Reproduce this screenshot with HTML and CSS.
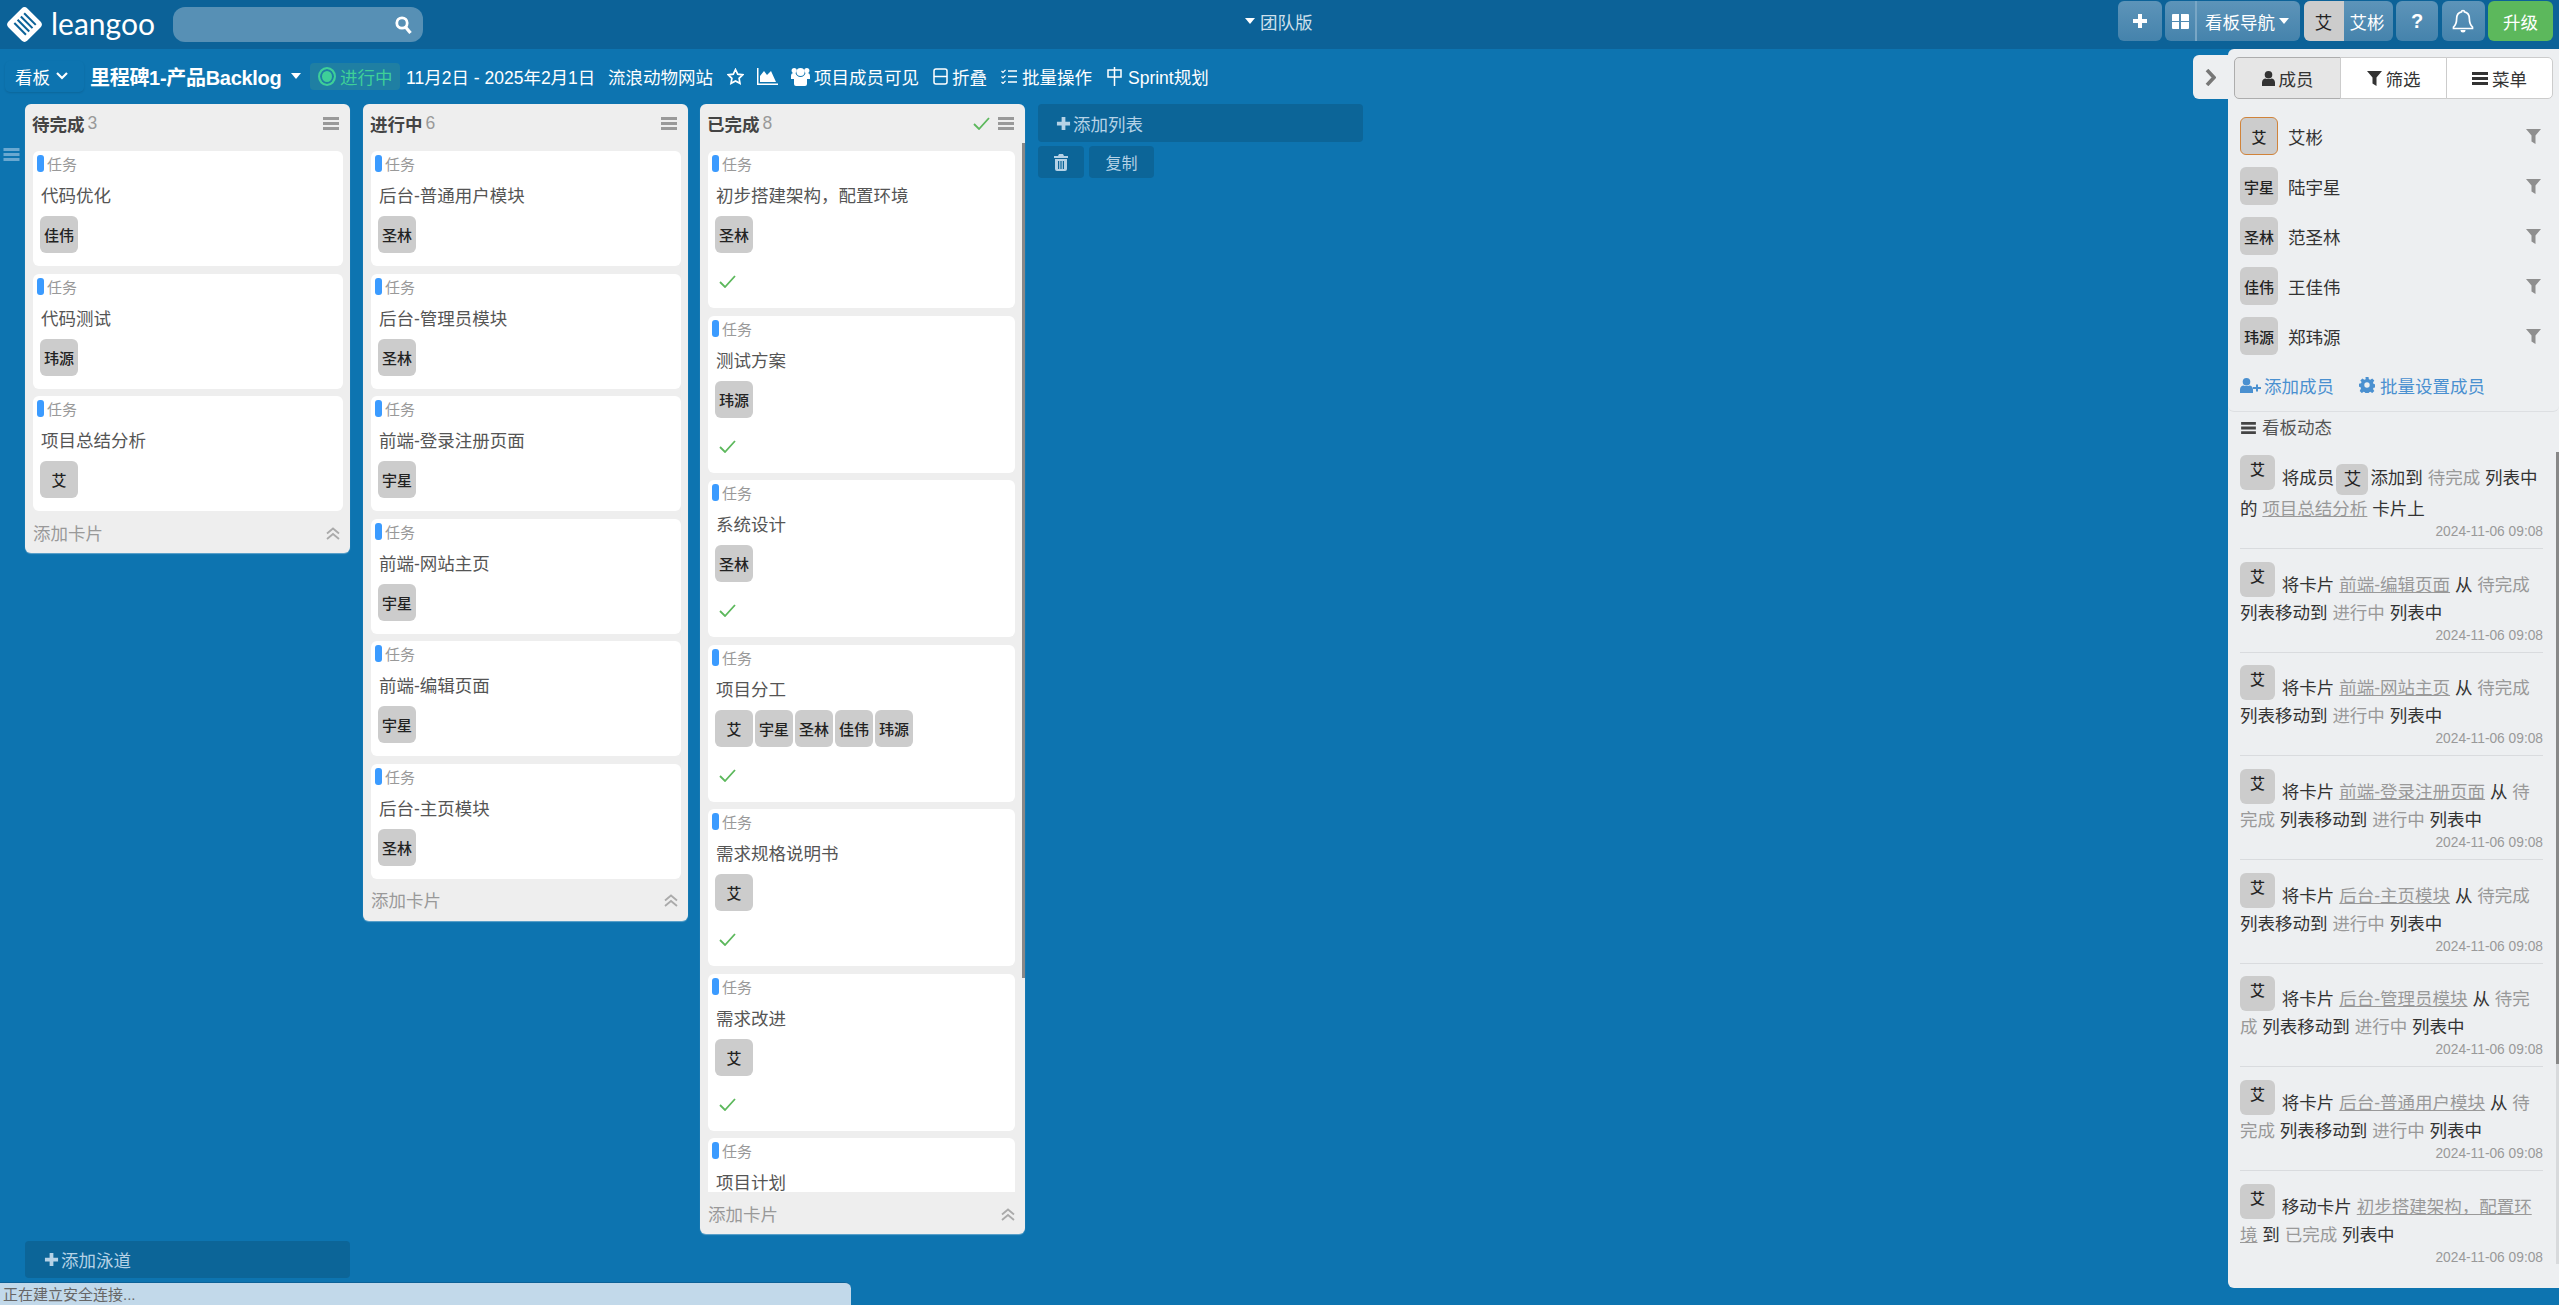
FILE: index.html
```html
<!DOCTYPE html>
<html lang="zh-CN">
<head>
  <meta charset="UTF-8" />
  <title>leangoo 看板</title>
  <link rel="stylesheet" href="styles.css">
</head>
<body>
  <svg class="sprite" width="0" height="0">
    <symbol id="i-plus" viewBox="0 0 16 16"><path d="M6 1h4v5h5v4h-5v5H6v-5H1V6h5z"/></symbol>
    <symbol id="i-bars" viewBox="0 0 16 13"><path d="M0 0h16v3H0zM0 5h16v3H0zM0 10h16v3H0z"/></symbol>
    <symbol id="i-grid" viewBox="0 0 17 15"><path d="M0 1a1 1 0 0 1 1-1h6v7H0zM9 0h7a1 1 0 0 1 1 1v6H9zM0 8h7v7H1a1 1 0 0 1-1-1zM9 8h8v6a1 1 0 0 1-1 1H9z"/></symbol>
    <symbol id="i-caret" viewBox="0 0 10 6"><path d="M0 0h10L5 6z"/></symbol>
    <symbol id="i-check" viewBox="0 0 17 13"><path d="M1 7l5 5L16 1" fill="none" stroke="#5cb85c" stroke-width="1.8"/></symbol>
    <symbol id="i-filter" viewBox="0 0 15 15"><path d="M0 0h15L9.5 6.5V15l-4-2.5V6.5z"/></symbol>
    <symbol id="i-user" viewBox="0 0 13 15"><circle cx="6.5" cy="3.8" r="3.8"/><path d="M0 15v-3.5C0 9 2 7.5 3.5 7.5c1 .8 5 .8 6 0C11 7.5 13 9 13 11.5V15z"/></symbol>
    <symbol id="i-users" viewBox="0 0 19 19"><circle cx="9.5" cy="5" r="4"/><circle cx="3.2" cy="3.5" r="2.6"/><circle cx="15.800" cy="3.5" r="2.6"/><path d="M0 12V9c0-2 1-3 2.5-3h2C5 8 7 10 9.5 10S14 8 14.500 6h2C18 6 19 7 19 9v3h-3v5a2 2 0 0 1-2 2H5a2 2 0 0 1-2-2v-5z"/></symbol>
    <symbol id="i-chev" viewBox="0 0 12 17"><path d="M3 1l7 7.500-7 7.500" fill="none" stroke="#777" stroke-width="3.600"/></symbol>
    <symbol id="i-dbl" viewBox="0 0 14 13"><path d="M1 6.500l6-5 6 5M1 12l6-5 6 5" fill="none" stroke="#aaa" stroke-width="1.800"/></symbol>
    <symbol id="i-trash" viewBox="0 0 14 17"><path d="M5 0h4l1 2h4v2H0V2h4zM1 5h12v10a2 2 0 0 1-2 2H3a2 2 0 0 1-2-2zm3 2v8h1.200V7zm2.400 0v8h1.200V7zm2.400 0v8H10V7z" fill-rule="evenodd"/></symbol>
    <symbol id="i-search" viewBox="0 0 17 18"><circle cx="7" cy="7" r="5.200" fill="none" stroke="#fff" stroke-width="2.800"/><path d="M10.500 11l5 6" stroke="#fff" stroke-width="3.200"/></symbol>
    <symbol id="i-bell" viewBox="0 0 22 24"><path d="M11 1.500c-1 0-1.500.6-1.500 1.400C6 3.600 4.600 6.500 4.600 10c0 4-1 6-3.100 8v1.500h19V18c-2.100-2-3.100-4-3.100-8 0-3.500-1.400-6.400-4.900-7.100 0-.8-.5-1.400-1.500-1.400z" fill="none" stroke="#fff" stroke-width="1.700"/><path d="M8.500 21a2.500 2.500 0 0 0 5 0z" fill="#fff"/></symbol>
    <symbol id="i-star" viewBox="0 0 17 17"><path d="M8.500 1.500l2.200 4.600 5 .7-3.600 3.500.9 5-4.500-2.400L4 15.300l.9-5L1.300 6.800l5-.7z" fill="none" stroke="#fff" stroke-width="1.700"/></symbol>
    <symbol id="i-chart" viewBox="0 0 21 17"><path d="M0 0h1.500v15.500H21V17H0z"/><path d="M3 14V8l4-5 3 4 4-4 5 11z"/></symbol>
    <symbol id="i-fold" viewBox="0 0 15 17"><rect x="1" y="1" width="13" height="15" rx="2" fill="none" stroke="#fff" stroke-width="1.500"/><path d="M1 8.500h13" stroke="#fff" stroke-width="1.500"/></symbol>
    <symbol id="i-batch" viewBox="0 0 16 15"><path d="M7 2h9M7 7.500h9M7 13h9" stroke="#fff" stroke-width="1.500"/><path d="M.5 2l1.500 1.500L4.500.8M.5 7.500L2 9l2.500-2.700M.5 13L2 14.500l2.500-2.700" fill="none" stroke="#fff" stroke-width="1.200"/></symbol>
    <symbol id="i-sprint" viewBox="0 0 15 19"><path d="M1 3h13v7H1z" fill="none" stroke="#fff" stroke-width="1.500"/><path d="M7.500 0v19" stroke="#fff" stroke-width="1.500"/></symbol>
    <symbol id="i-useradd" viewBox="0 0 21 15"><circle cx="6.500" cy="3.800" r="3.800"/><path d="M0 15v-3.500C0 9 2 7.500 3.500 7.500c1 .8 5 .8 6 0 1.500 0 3.500 1.500 3.500 4V15z"/><path d="M16 6.500h2v2.500h3v2h-3v2.500h-2V11h-3V9h3z"/></symbol>
    <symbol id="i-gear" viewBox="0 0 16 16"><path fill-rule="evenodd" d="M6.500 0h3l.4 2.200 1.400.6L13.200 1.500l2.100 2.100-1.300 1.900.6 1.400 2 .4v3l-2 .4-.6 1.400 1.300 1.900-2.100 2.100-1.900-1.300-1.400.6-.4 2h-3l-.4-2-1.400-.6-1.900 1.300-2.100-2.100L2 11.500l-.6-1.400-1.400-.4v-3l2-.4L2.600 5 1.300 3.600l2.100-2.100 1.900 1.300 1.400-.6zM8 5.300a2.700 2.700 0 1 0 0 5.400 2.700 2.700 0 0 0 0-5.400z"/></symbol>
    <symbol id="i-logo" viewBox="0 0 36 36">
      <g transform="rotate(45 18 18)">
        <rect x="5" y="5" width="26" height="26" rx="4" fill="#fff"/>
        <path d="M10 10.500h16M10 15h16M10 19.500h16M10 24h16" stroke="#0c6298" stroke-width="2"/>
      </g>
    </symbol>
  </svg>

  <header class="topbar">
    <div class="brand">
      <svg class="logo"><use href="#i-logo"/></svg>
      <span class="brand-name">leangoo</span>
    </div>
    <div class="search"><svg class="search-icon"><use href="#i-search"/></svg></div>
    <div class="edition"><svg class="caret"><use href="#i-caret"/></svg>团队版</div>
    <nav class="top-actions">
      <a class="top-btn btn-plus"><svg class="ic-plus"><use href="#i-plus"/></svg></a>
      <div class="top-btn btn-nav">
        <span class="nav-grid"><svg class="ic-grid"><use href="#i-grid"/></svg></span>
        <span class="nav-label">看板导航<svg class="caret"><use href="#i-caret"/></svg></span>
      </div>
      <div class="top-btn btn-me"><span class="me-avatar">艾</span><span class="me-name">艾彬</span></div>
      <a class="top-btn btn-help">?</a>
      <a class="top-btn btn-bell"><svg class="ic-bell"><use href="#i-bell"/></svg></a>
      <a class="top-btn btn-upgrade">升级</a>
    </nav>
  </header>

  <div class="subbar">
    <div class="view-btn">看板<svg class="view-chev" viewBox="0 0 12 8"><path d="M1 1l5 5 5-5" fill="none" stroke="#fff" stroke-width="2.200"/></svg></div>
    <div class="board-title">里程碑1-产品Backlog</div>
    <svg class="caret title-caret"><use href="#i-caret"/></svg>
    <div class="status"><span class="status-dot"></span>进行中</div>
    <span class="dates">11月2日 - 2025年2月1日</span>
    <span class="site">流浪动物网站</span>
    <svg class="ic-star"><use href="#i-star"/></svg>
    <svg class="ic-chart"><use href="#i-chart"/></svg>
    <span class="sub-item item-users"><svg class="ic-users"><use href="#i-users"/></svg>项目成员可见</span>
    <span class="sub-item item-fold"><svg class="ic-fold"><use href="#i-fold"/></svg>折叠</span>
    <span class="sub-item item-batch"><svg class="ic-batch"><use href="#i-batch"/></svg>批量操作</span>
    <span class="sub-item item-sprint"><svg class="ic-sprint"><use href="#i-sprint"/></svg>Sprint规划</span>
  </div>

  <main class="board-area">
    <svg class="lane-handle"><use href="#i-bars"/></svg>

    <div class="board">
      <section class="list">
        <div class="list-head">
          <span class="list-title">待完成</span><span class="list-count">3</span>
          <svg class="list-menu"><use href="#i-bars"/></svg>
        </div>
        <div class="list-body">
          <article class="card"><div class="card-type">任务</div><div class="card-title">代码优化</div><div class="avatars"><span class="avatar">佳伟</span></div></article>
          <article class="card"><div class="card-type">任务</div><div class="card-title">代码测试</div><div class="avatars"><span class="avatar">玮源</span></div></article>
          <article class="card"><div class="card-type">任务</div><div class="card-title">项目总结分析</div><div class="avatars"><span class="avatar">艾</span></div></article>
        </div>
        <div class="list-foot"><span>添加卡片</span><svg class="ic-dbl"><use href="#i-dbl"/></svg></div>
      </section>

      <section class="list">
        <div class="list-head">
          <span class="list-title">进行中</span><span class="list-count">6</span>
          <svg class="list-menu"><use href="#i-bars"/></svg>
        </div>
        <div class="list-body">
          <article class="card"><div class="card-type">任务</div><div class="card-title">后台-普通用户模块</div><div class="avatars"><span class="avatar">圣林</span></div></article>
          <article class="card"><div class="card-type">任务</div><div class="card-title">后台-管理员模块</div><div class="avatars"><span class="avatar">圣林</span></div></article>
          <article class="card"><div class="card-type">任务</div><div class="card-title">前端-登录注册页面</div><div class="avatars"><span class="avatar">宇星</span></div></article>
          <article class="card"><div class="card-type">任务</div><div class="card-title">前端-网站主页</div><div class="avatars"><span class="avatar">宇星</span></div></article>
          <article class="card"><div class="card-type">任务</div><div class="card-title">前端-编辑页面</div><div class="avatars"><span class="avatar">宇星</span></div></article>
          <article class="card"><div class="card-type">任务</div><div class="card-title">后台-主页模块</div><div class="avatars"><span class="avatar">圣林</span></div></article>
        </div>
        <div class="list-foot"><span>添加卡片</span><svg class="ic-dbl"><use href="#i-dbl"/></svg></div>
      </section>

      <section class="list list-done">
        <div class="list-head">
          <span class="list-title">已完成</span><span class="list-count">8</span>
          <svg class="head-check"><use href="#i-check"/></svg>
          <svg class="list-menu"><use href="#i-bars"/></svg>
        </div>
        <div class="list-body">
          <article class="card"><div class="card-type">任务</div><div class="card-title">初步搭建架构，配置环境</div><div class="avatars"><span class="avatar">圣林</span></div><svg class="card-check"><use href="#i-check"/></svg></article>
          <article class="card"><div class="card-type">任务</div><div class="card-title">测试方案</div><div class="avatars"><span class="avatar">玮源</span></div><svg class="card-check"><use href="#i-check"/></svg></article>
          <article class="card"><div class="card-type">任务</div><div class="card-title">系统设计</div><div class="avatars"><span class="avatar">圣林</span></div><svg class="card-check"><use href="#i-check"/></svg></article>
          <article class="card"><div class="card-type">任务</div><div class="card-title">项目分工</div><div class="avatars"><span class="avatar">艾</span><span class="avatar">宇星</span><span class="avatar">圣林</span><span class="avatar">佳伟</span><span class="avatar">玮源</span></div><svg class="card-check"><use href="#i-check"/></svg></article>
          <article class="card"><div class="card-type">任务</div><div class="card-title">需求规格说明书</div><div class="avatars"><span class="avatar">艾</span></div><svg class="card-check"><use href="#i-check"/></svg></article>
          <article class="card"><div class="card-type">任务</div><div class="card-title">需求改进</div><div class="avatars"><span class="avatar">艾</span></div><svg class="card-check"><use href="#i-check"/></svg></article>
          <article class="card"><div class="card-type">任务</div><div class="card-title">项目计划</div></article>
        </div>
        <span class="list-thumb"></span>
        <div class="list-foot"><span>添加卡片</span><svg class="ic-dbl"><use href="#i-dbl"/></svg></div>
      </section>

      <div class="add-col">
        <div class="add-list"><svg class="ic-add"><use href="#i-plus"/></svg>添加列表</div>
        <div class="lane-tools">
          <span class="tool-btn tool-trash"><svg class="ic-trash"><use href="#i-trash"/></svg></span>
          <span class="tool-btn tool-copy">复制</span>
        </div>
      </div>
    </div>

    <div class="add-lane"><svg class="ic-add"><use href="#i-plus"/></svg>添加泳道</div>

    <a class="panel-toggle"><svg class="ic-chev"><use href="#i-chev"/></svg></a>
    <aside class="panel">
      <div class="tabs">
        <span class="tab active"><svg class="ic-tab-user"><use href="#i-user"/></svg>成员</span>
        <span class="tab"><svg class="ic-tab-filter"><use href="#i-filter"/></svg>筛选</span>
        <span class="tab"><svg class="ic-tab-bars"><use href="#i-bars"/></svg>菜单</span>
      </div>

      <ul class="members">
        <li class="member"><span class="avatar me">艾</span><span class="member-name">艾彬</span><svg class="member-filter"><use href="#i-filter"/></svg></li>
        <li class="member"><span class="avatar">宇星</span><span class="member-name">陆宇星</span><svg class="member-filter"><use href="#i-filter"/></svg></li>
        <li class="member"><span class="avatar">圣林</span><span class="member-name">范圣林</span><svg class="member-filter"><use href="#i-filter"/></svg></li>
        <li class="member"><span class="avatar">佳伟</span><span class="member-name">王佳伟</span><svg class="member-filter"><use href="#i-filter"/></svg></li>
        <li class="member"><span class="avatar">玮源</span><span class="member-name">郑玮源</span><svg class="member-filter"><use href="#i-filter"/></svg></li>
      </ul>

      <div class="member-links">
        <a><svg class="ic-useradd"><use href="#i-useradd"/></svg>添加成员</a>
        <a><svg class="ic-gear"><use href="#i-gear"/></svg>批量设置成员</a>
      </div>

      <div class="activity-head"><svg class="ic-activity"><use href="#i-bars"/></svg>看板动态</div>

      <div class="activity">
        <div class="act">
          <span class="act-avatar">艾</span> 将成员<span class="act-inline">艾</span>添加到 <span class="muted">待完成</span> 列表中的 <a class="act-link">项目总结分析</a> 卡片上
          <div class="act-time">2024-11-06 09:08</div>
        </div>
        <div class="act">
          <span class="act-avatar">艾</span> 将卡片 <a class="act-link">前端-编辑页面</a> 从 <span class="muted">待完成</span> 列表移动到 <span class="muted">进行中</span> 列表中
          <div class="act-time">2024-11-06 09:08</div>
        </div>
        <div class="act">
          <span class="act-avatar">艾</span> 将卡片 <a class="act-link">前端-网站主页</a> 从 <span class="muted">待完成</span> 列表移动到 <span class="muted">进行中</span> 列表中
          <div class="act-time">2024-11-06 09:08</div>
        </div>
        <div class="act">
          <span class="act-avatar">艾</span> 将卡片 <a class="act-link">前端-登录注册页面</a> 从 <span class="muted">待完成</span> 列表移动到 <span class="muted">进行中</span> 列表中
          <div class="act-time">2024-11-06 09:08</div>
        </div>
        <div class="act">
          <span class="act-avatar">艾</span> 将卡片 <a class="act-link">后台-主页模块</a> 从 <span class="muted">待完成</span> 列表移动到 <span class="muted">进行中</span> 列表中
          <div class="act-time">2024-11-06 09:08</div>
        </div>
        <div class="act">
          <span class="act-avatar">艾</span> 将卡片 <a class="act-link">后台-管理员模块</a> 从 <span class="muted">待完成</span> 列表移动到 <span class="muted">进行中</span> 列表中
          <div class="act-time">2024-11-06 09:08</div>
        </div>
        <div class="act">
          <span class="act-avatar">艾</span> 将卡片 <a class="act-link">后台-普通用户模块</a> 从 <span class="muted">待完成</span> 列表移动到 <span class="muted">进行中</span> 列表中
          <div class="act-time">2024-11-06 09:08</div>
        </div>
        <div class="act">
          <span class="act-avatar">艾</span> 移动卡片 <a class="act-link">初步搭建架构，配置环境</a> 到 <span class="muted">已完成</span> 列表中
          <div class="act-time">2024-11-06 09:08</div>
        </div>
      </div>
      <span class="act-track"><span class="act-thumb"></span></span>
    </aside>
  </main>

  <div class="conn-status">正在建立安全连接...</div>
</body>
</html>
```

FILE: styles.css
```css
:root {
  --board: #0d74b0;
  --topbar: #0c6298;
  --dark-btn: #0c6598;
  --list: #eeeeee;
  --panel: #edeff1;
  --muted: #999999;
  --text: #333333;
  --link: #4a90d0;
}

* {
  box-sizing: border-box;
}

html, body {
  height: 100%;
}

body {
  margin: 0;
  display: flex;
  flex-direction: column;
  overflow: hidden;
  background: var(--board);
  color: var(--text);
  font-family: "Liberation Sans", "Noto Sans CJK SC", sans-serif;
  font-size: 17.5px;
  position: relative;
}

svg {
  display: inline-block;
  fill: currentColor;
  flex: none;
}

.sprite {
  position: absolute;
}

/* top bar */
.topbar {
  height: 49px;
  flex: none;
  display: flex;
  align-items: center;
  background: var(--topbar);
  position: relative;
}

.brand {
  display: flex;
  align-items: center;
  width: 173px;
  padding-left: 6px;
  color: #fff;
}

.logo {
  width: 37px;
  height: 37px;
}

.brand-name {
  margin-left: 8px;
  font-family: "Lato", sans-serif;
  font-size: 30px;
  line-height: 40px;
  margin-top: -4px;
}

.search {
  width: 250px;
  height: 35px;
  border-radius: 12px;
  background: #5790b5;
  display: flex;
  align-items: center;
  justify-content: flex-end;
  padding-right: 11px;
}

.search-icon {
  width: 17px;
  height: 18px;
}

.edition {
  margin-left: 822px;
  width: 70px;
  color: #cfe0ec;
  display: flex;
  align-items: center;
  margin-top: -7px;
}

.caret {
  width: 10px;
  height: 6px;
  color: #fff;
}

.edition .caret {
  margin-right: 5px;
}

.top-actions {
  margin-left: auto;
  display: flex;
  gap: 3.5px;
  padding: 1px 6px 0 0;
  align-self: flex-start;
}

.top-btn {
  height: 40px;
  border-radius: 6px;
  background: linear-gradient(#5d94b9, #4583ac);
  color: #fff;
  display: flex;
  align-items: center;
  justify-content: center;
}

.btn-plus { width: 44px; }
.ic-plus { width: 16px; height: 16px; }

.btn-nav { width: 135px; overflow: hidden; justify-content: flex-start; }
.nav-grid {
  width: 32px;
  height: 100%;
  display: flex;
  align-items: center;
  justify-content: center;
  border-right: 2px solid #79a6c5;
}
.ic-grid { width: 17px; height: 15px; }
.nav-label { padding-left: 8px; display: flex; align-items: center; white-space: nowrap; }
.nav-label .caret { margin-left: 4px; }

.btn-me { width: 89px; overflow: hidden; justify-content: flex-start; }
.me-avatar {
  width: 40px;
  height: 100%;
  background: #cccccc;
  color: #222;
  display: flex;
  align-items: center;
  justify-content: center;
}
.me-name { padding-left: 6px; }

.btn-help { width: 42px; font-weight: bold; font-size: 20px; }
.btn-bell { width: 43px; }
.ic-bell { width: 22px; height: 24px; }
.btn-upgrade { width: 65px; background: #5cb85c; }

/* board header */
.subbar {
  height: 55px;
  flex: none;
  display: flex;
  align-items: center;
  color: #fff;
  white-space: nowrap;
  padding-bottom: 1px;
}

.view-btn {
  width: 79px;
  height: 31px;
  margin-left: 5px;
  padding-left: 10px;
  display: flex;
  align-items: center;
  border-radius: 5px;
  box-shadow: 0 1px 2px rgba(0,0,0,0.12);
}

.view-chev {
  width: 12px;
  height: 8px;
  margin-left: 6px;
}

.board-title {
  margin-left: 6px;
  width: 195px;
  font-weight: bold;
  font-size: 20px;
  letter-spacing: -0.3px;
}

.title-caret { margin-left: 6px; }

.status {
  margin-left: 9px;
  width: 90px;
  height: 27px;
  border-radius: 4px;
  background: #1f7fa3;
  color: #3ecf98;
  display: flex;
  align-items: center;
  padding-left: 8px;
}

.status-dot {
  width: 18px;
  height: 19px;
  border: 2px solid #3ecf98;
  border-radius: 50%;
  margin-right: 4px;
  background: #3ecf98;
  box-shadow: inset 0 0 0 2px #1f7fa3;
}

.dates { margin-left: 6px; width: 189px; }
.site { margin-left: 13px; width: 106px; }
.ic-star { width: 17px; height: 17px; margin-left: 13px; }
.ic-chart { width: 21px; height: 17px; margin-left: 13px; }

.sub-item { display: flex; align-items: center; }
.item-users { margin-left: 13px; }
.item-fold { margin-left: 14px; }
.item-batch { margin-left: 14px; }
.item-sprint { margin-left: 15px; }

.ic-users { width: 19px; height: 19px; margin-right: 4px; }
.ic-fold { width: 15px; height: 17px; margin-right: 4px; }
.ic-batch { width: 16px; height: 15px; margin-right: 5px; }
.ic-sprint { width: 15px; height: 19px; margin-right: 6px; }

/* board */
.board-area {
  flex: 1;
  min-height: 0;
  position: relative;
  padding-left: 25px;
}

.lane-handle {
  position: absolute;
  left: 3px;
  top: 44px;
  width: 17px;
  height: 13px;
  color: #6aa8d0;
}

.board {
  display: flex;
  align-items: flex-start;
  gap: 13px;
  height: 1130px;
}

.list {
  width: 325px;
  max-height: 100%;
  display: flex;
  flex-direction: column;
  background: var(--list);
  border-radius: 6px;
  box-shadow: 0 1px 1px rgba(255,255,255,0.35);
}

.list-done {
  height: 100%;
  position: relative;
  margin-left: -1px;
}

.list-head {
  height: 39px;
  flex: none;
  display: flex;
  align-items: center;
  padding: 0 11px 0 7px;
}

.list-title {
  font-weight: bold;
  color: #444;
}

.list-count {
  margin-left: 3px;
  color: var(--muted);
}

.list-menu {
  margin-left: auto;
  width: 16px;
  height: 13px;
  color: #999;
}

.head-check {
  margin-left: auto;
  width: 17px;
  height: 13px;
}

.head-check + .list-menu { margin-left: 8px; }

.list-body {
  min-height: 0;
  padding: 8px 7px 0 8px;
  display: flex;
  flex-direction: column;
  gap: 7.5px;
}

.list-done .list-body {
  flex: 1;
  overflow: hidden;
  padding-right: 10px;
}

.list-thumb {
  position: absolute;
  top: 39px;
  right: 0;
  width: 3px;
  height: 835px;
  background: #888;
}

.card {
  flex: none;
  height: 115px;
  background: #fff;
  border-radius: 6px;
  padding: 4px 7px 0 7px;
}

.list-done .card { height: 157px; }

.card-type {
  height: 20px;
  line-height: 20px;
  padding-left: 7px;
  position: relative;
  font-size: 15px;
  color: var(--muted);
}

.card-type::before {
  content: "";
  position: absolute;
  left: -3px;
  top: 0;
  width: 7px;
  height: 17px;
  border-radius: 3px;
  background: #3b9bff;
}

.card-title {
  margin-top: 9px;
  padding-left: 1px;
  line-height: 24px;
  color: #555;
}

.avatars {
  display: flex;
  gap: 2px;
  margin-top: 8px;
}

.avatar {
  width: 38px;
  height: 37px;
  flex: none;
  border-radius: 6px;
  background: #cccccc;
  color: #222;
  font-size: 15px;
  font-weight: 500;
  display: flex;
  align-items: center;
  justify-content: center;
}

.card-check {
  display: block;
  width: 17px;
  height: 13px;
  margin: 22px 0 0 4px;
}

.list-foot {
  height: 42px;
  flex: none;
  display: flex;
  align-items: center;
  justify-content: space-between;
  padding: 0 10px 0 8px;
  color: var(--muted);
}

.ic-dbl { width: 14px; height: 13px; margin-top: 2px; }

/* add list / lane */
.add-col {
  width: 325px;
  display: flex;
  flex-direction: column;
  gap: 4px;
}

.add-list, .add-lane {
  background: var(--dark-btn);
  border-radius: 4px;
  color: #b5d2e6;
  display: flex;
  align-items: center;
}

.add-list {
  height: 38px;
  padding-left: 18px;
}

.add-lane {
  width: 325px;
  height: 37px;
  margin-top: 7px;
  padding-left: 19px;
}

.ic-add {
  width: 15px;
  height: 15px;
  margin-right: 2px;
  color: #b5d2e6;
}

.lane-tools {
  display: flex;
  gap: 5px;
}

.tool-btn {
  height: 32px;
  border-radius: 4px;
  background: var(--dark-btn);
  color: #b5d2e6;
  font-size: 16px;
  display: flex;
  align-items: center;
  justify-content: center;
}

.tool-trash { width: 46px; }
.tool-copy { width: 65px; }
.ic-trash { width: 14px; height: 17px; }

/* right panel */
.panel-toggle {
  position: absolute;
  top: -49px;
  right: 331px;
  width: 35px;
  height: 44px;
  background: var(--panel);
  border-radius: 6px 0 0 6px;
  display: flex;
  align-items: center;
  justify-content: center;
}

.ic-chev { width: 12px; height: 17px; margin-left: -2px; }

.panel {
  position: absolute;
  top: -55px;
  right: 0;
  width: 331px;
  height: 1239px;
  background: var(--panel);
  border-radius: 6px 0 0 6px;
  padding-top: 8px;
  display: flex;
  flex-direction: column;
}

.tabs {
  display: flex;
  height: 42px;
  margin: 0 6px;
  flex: none;
}

.tab {
  flex: 1;
  background: #fff;
  border: 1px solid #ccc;
  margin-left: -1px;
  display: flex;
  align-items: center;
  justify-content: center;
  color: #333;
}

.tab:first-child { border-radius: 5px 0 0 5px; margin-left: 0; }
.tab:last-child { border-radius: 0 5px 5px 0; }

.tab.active {
  background: #e6e6e6;
  border-color: #adadad;
}

.ic-tab-user { width: 13px; height: 15px; margin-right: 4px; }
.ic-tab-filter { width: 15px; height: 15px; margin-right: 4px; }
.ic-tab-bars { width: 16px; height: 13px; margin-right: 4px; }

.members {
  list-style: none;
  margin: 18px 0 0;
  padding: 0 12px;
  display: flex;
  flex-direction: column;
  gap: 12px;
}

.member {
  display: flex;
  align-items: center;
}

.member .avatar { height: 38px; }

.avatar.me {
  border: 1px solid #d0833a;
  font-size: 15px;
}

.member-name { margin-left: 10px; }

.member-filter {
  margin-left: auto;
  margin-right: 6px;
  width: 15px;
  height: 15px;
  color: #8f8f8f;
}

.member-links {
  flex: none;
  display: flex;
  gap: 25px;
  height: 57px;
  padding: 18px 12px 0;
  color: var(--link);
  border-bottom: 1px solid #dddfe2;
  border-radius: 0 0 6px 6px;
}

.member-links a { display: flex; align-items: center; height: 24px; }
.ic-useradd { width: 21px; height: 15px; margin-right: 3px; }
.ic-gear { width: 16px; height: 16px; margin-right: 5px; }

.activity-head {
  flex: none;
  padding: 4px 12px 0;
  height: 40px;
  display: flex;
  align-items: flex-start;
  color: #555;
  line-height: 24px;
}

.ic-activity {
  width: 17px;
  height: 12px;
  margin: 6px 5px 0 0;
  color: #444;
}

.activity {
  flex: 1;
  min-height: 0;
  overflow: hidden;
  margin-bottom: 24px;
  padding: 3px 16px 0 12px;
  line-height: 28px;
}

.act-track {
  position: absolute;
  top: 403px;
  right: 0;
  width: 3px;
  height: 812px;
  background: #d8dadc;
}

.act-thumb {
  display: block;
  height: 612px;
  background: #888;
}

.act {
  border-bottom: 1px solid #d9dbde;
  padding-bottom: 7px;
  margin-bottom: 12.7px;
}

.act:last-child { border-bottom: none; }

.act-avatar, .act-inline {
  display: inline-block;
  overflow: hidden;
  text-align: center;
  border-radius: 6px;
  background: #ccc;
  color: #222;
}

.act-avatar {
  width: 35px;
  height: 35px;
  line-height: 30px;
  font-size: 15px;
  font-weight: 500;
  vertical-align: -6px;
  margin-right: 2px;
}

.act-inline {
  width: 32px;
  height: 31px;
  line-height: 31px;
  margin: 0 2px;
  vertical-align: -11px;
}

.muted { color: var(--muted); }

.act-link {
  color: var(--muted);
  text-decoration: underline;
}

.act-time {
  font-size: 13.75px;
  line-height: 18px;
  text-align: right;
  color: var(--muted);
}

/* connection status */
.conn-status {
  position: absolute;
  left: 0;
  bottom: 0;
  width: 851px;
  height: 23px;
  background: #c2d9ea;
  border-top: 1px solid #0c6298;
  border-radius: 0 6px 0 0;
  color: #666;
  font-size: 15px;
  line-height: 24px;
  padding-left: 3px;
}
```
